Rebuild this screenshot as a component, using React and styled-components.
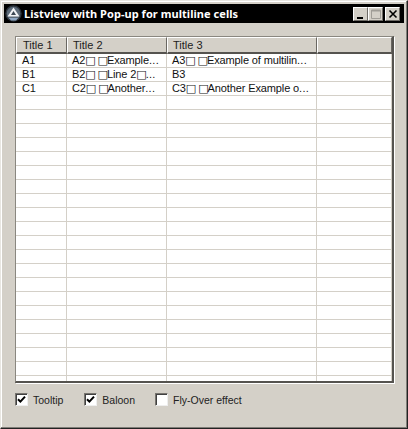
import React from 'react'
import styled, { createGlobalStyle } from 'styled-components'

const GlobalStyle = createGlobalStyle`
  html, body {
    margin: 0;
    padding: 0;
    background: #d4d0c8;
  }
`

const COLUMNS = '51px 100px 150px 75px'

const Window = styled.div`
  box-sizing: border-box;
  width: 408px;
  height: 429px;
  display: flex;
  flex-direction: column;
  padding: 4px;
  background: #d4d0c8;
  border: 1px solid;
  border-color: #e8e6e1 #222 #222 #e8e6e1;
  box-shadow: inset -1px -1px 0 #807d78, inset 1px 1px 0 #fff;
  font-family: 'Liberation Sans', Arial, sans-serif;
  font-size: 11px;
  color: #111;
`

const TitleBar = styled.div`
  height: 19px;
  flex: none;
  display: flex;
  align-items: center;
  margin: -1px -1px 0 -1px;
  padding: 0 4px 0 1px;
  background: #000;
`

const Title = styled.div`
  flex: 1;
  margin-left: 2px;
  font-family: 'Noto Sans', sans-serif;
  font-size: 11px;
  font-weight: 700;
  letter-spacing: 0.05px;
  color: #fff;
  white-space: nowrap;
`

const CaptionButton = styled.div`
  box-sizing: border-box;
  width: 15px;
  height: 14px;
  margin-left: ${p => p.$gap || 0}px;
  display: flex;
  align-items: center;
  justify-content: center;
  background: #d4d0c8;
  border: 1px solid;
  border-color: #fff #6e6b66 #6e6b66 #fff;
`

const Client = styled.div`
  flex: 1;
  display: flex;
  flex-direction: column;
  padding: 13px 10px 0 10px;
`

const ListView = styled.div`
  box-sizing: border-box;
  width: 379px;
  height: 347px;
  flex: none;
  overflow: hidden;
  background: #fff;
  border-style: solid;
  border-width: 1px 2px 2px 1px;
  border-color: #8a8780 #55534f #55534f #8a8780;
  box-shadow: 1px 1px 0 #fff;
`

const HeaderRow = styled.div`
  display: grid;
  grid-template-columns: ${COLUMNS};
  height: 17px;
`

const HeaderCell = styled.div`
  box-sizing: border-box;
  padding-left: 5px;
  line-height: 14px;
  background: #d4d0c8;
  border-top: 1px solid #fff;
  border-left: 1px solid #fff;
  border-right: 1px solid #6a6762;
  border-bottom: 2px solid #55534f;
  color: #222;

  &:first-child {
    padding-left: 6px;
  }
`

const Row = styled.div`
  display: grid;
  grid-template-columns: ${COLUMNS};
  height: 14px;
  box-sizing: border-box;
  border-bottom: 1px solid #d4d0c8;
`

const Cell = styled.div`
  box-sizing: border-box;
  padding-left: 5px;
  line-height: 13px;
  letter-spacing: -0.12px;
  white-space: nowrap;
  overflow: hidden;
  border-right: 1px solid #d4d0c8;

  &:first-child {
    padding-left: 6px;
  }
`

const Tofu = styled.span`
  font-family: 'DejaVu Sans', sans-serif;
  font-size: 11px;
  letter-spacing: -1px;
`

const Dots = styled.span`
  letter-spacing: 0.3px;
`

const Options = styled.div`
  display: flex;
  align-items: center;
  margin-top: 10px;
  color: #222;
`

const Option = styled.label`
  display: flex;
  align-items: center;
  margin-right: ${p => p.$gap}px;
  font-size: 10.5px;
`

const Box = styled.span`
  box-sizing: border-box;
  width: 13px;
  height: 13px;
  margin-right: 5px;
  display: flex;
  align-items: center;
  justify-content: center;
  background: #fff;
  border: 1px solid;
  border-color: #77746f #eee #eee #77746f;
  box-shadow: inset 1px 1px 0 #404040;
`

const headers = ['Title 1', 'Title 2', 'Title 3', '']

const rows = [
  ['A1', 'A2\u25a1 \u25a1Example...', 'A3\u25a1 \u25a1Example of multilin...', ''],
  ['B1', 'B2\u25a1 \u25a1Line 2\u25a1...', 'B3', ''],
  ['C1', 'C2\u25a1 \u25a1Another...', 'C3\u25a1 \u25a1Another Example o...', ''],
  ...Array.from({ length: 21 }, () => ['', '', '', '']),
]

const options = [
  { label: 'Tooltip', checked: true, gap: 21 },
  { label: 'Baloon', checked: true, gap: 20 },
  { label: 'Fly-Over effect', checked: false, gap: 0 },
]

const cellParts = text =>
  text.split(/(\u25a1|\.\.\.)/).map((part, i) => {
    if (part === '\u25a1') return <Tofu key={i}>{part}</Tofu>
    if (part === '...') return <Dots key={i}>{part}</Dots>
    return part
  })

const AppIcon = () => (
  <svg width="17" height="17" viewBox="0 0 17 17">
    <circle cx="8.5" cy="8.5" r="8.2" fill="#2c343c" />
    <circle cx="8.5" cy="8.5" r="6.8" fill="#5c6a78" />
    <path d="M8.5 2.5 14.5 11.5H2.5z" fill="#f2f4f6" />
    <path d="M8.5 6 11 10H6z" fill="#3c4854" />
    <path d="M4 13h9l-2 2.5H6z" fill="#8fa8c4" />
  </svg>
)

const Check = () => (
  <svg width="9" height="9" viewBox="0 0 9 9">
    <path d="M1 4.2 3.4 6.6 8 1.6" fill="none" stroke="#000" strokeWidth="2" />
  </svg>
)

const App = () => (
  <Window>
    <GlobalStyle />
    <TitleBar>
      <AppIcon />
      <Title>Listview with Pop-up for multiline cells</Title>
      <CaptionButton>
        <svg width="10" height="10" viewBox="0 0 10 10">
          <path d="M1 8h6v2H1z" fill="#000" />
        </svg>
      </CaptionButton>
      <CaptionButton>
        <svg width="10" height="10" viewBox="0 0 10 10">
          <path d="M.5 1.5h9v8h-9zM.5 1h9v1h-9z" fill="none" stroke="#a09d97" />
        </svg>
      </CaptionButton>
      <CaptionButton $gap={2}>
        <svg width="10" height="10" viewBox="0 0 10 10">
          <path d="M1.5 1.5l7 7M8.5 1.5l-7 7" stroke="#000" strokeWidth="1.6" />
        </svg>
      </CaptionButton>
    </TitleBar>
    <Client>
      <ListView>
        <HeaderRow>
          {headers.map((title, i) => (
            <HeaderCell key={i}>{title}</HeaderCell>
          ))}
        </HeaderRow>
        {rows.map((cells, i) => (
          <Row key={i}>
            {cells.map((text, j) => (
              <Cell key={j}>{cellParts(text)}</Cell>
            ))}
          </Row>
        ))}
      </ListView>
      <Options>
        {options.map(({ label, checked, gap }) => (
          <Option key={label} $gap={gap}>
            <Box>{checked && <Check />}</Box>
            {label}
          </Option>
        ))}
      </Options>
    </Client>
  </Window>
)

export default App
